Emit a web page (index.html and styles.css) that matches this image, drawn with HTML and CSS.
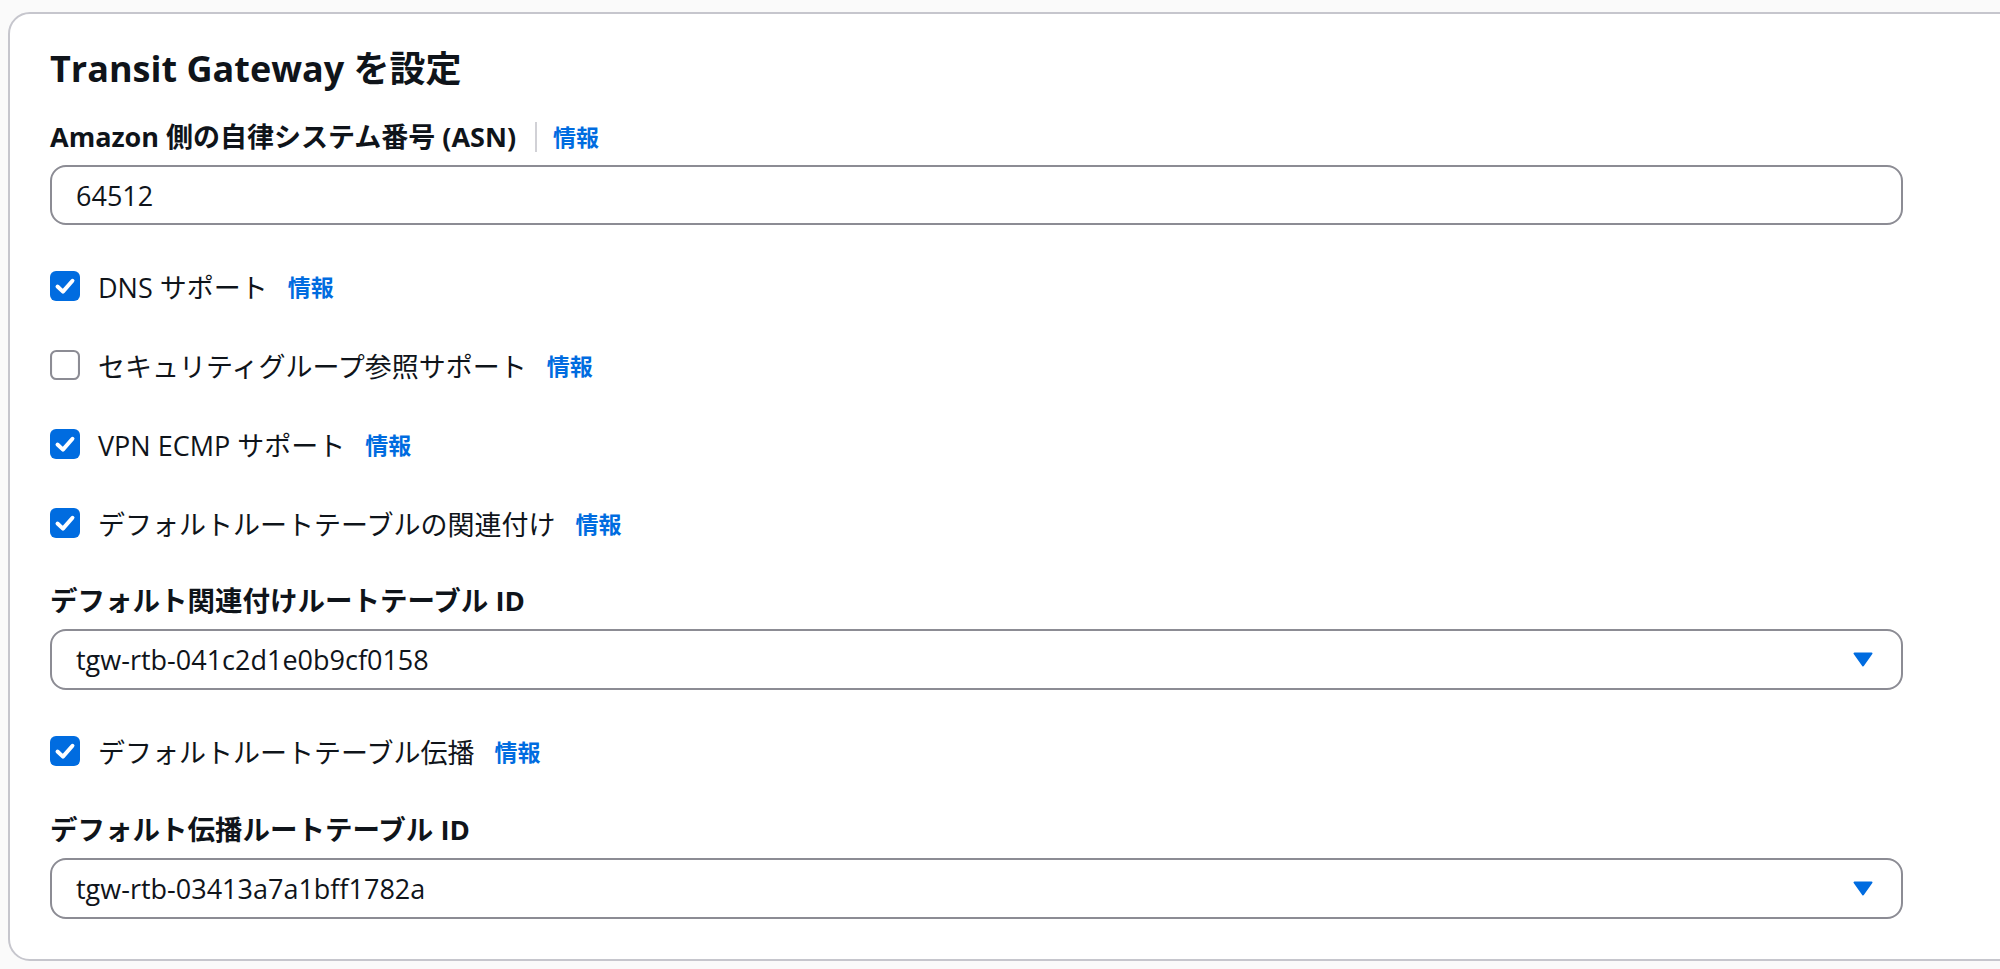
FILE: index.html
```html
<!DOCTYPE html>
<html lang="ja">
<head>
    <meta charset="UTF-8">
    <meta name="viewport" content="width=device-width, initial-scale=1.0">
    <title>Transit Gateway を設定</title>
    <link rel="stylesheet" href="styles.css">
</head>
<body>
    <div class="panel">
        <h2 class="panel-title">Transit Gateway を設定</h2>

        <!-- ASN -->
        <div class="field">
            <div class="field-label">
                <span class="asn-label">Amazon 側の自律システム番号 (ASN)</span>
                <span class="divider"></span>
                <a class="info" href="#">情報</a>
            </div>
            <div class="input">64512</div>
        </div>

        <div class="check-row">
            <svg class="box" viewBox="0 0 16 16"><rect class="on" x="0" y="0" width="16" height="16" rx="3.2"/><polyline class="tick" points="4,8.3 6.9,11 12,5.2"/></svg>
            <span class="check-text">DNS サポート</span>
            <a class="info" href="#">情報</a>
        </div>

        <div class="check-row">
            <svg class="box" viewBox="0 0 16 16"><rect class="off" x="0.55" y="0.55" width="14.9" height="14.9" rx="2.8"/></svg>
            <span class="check-text">セキュリティグループ参照サポート</span>
            <a class="info" href="#">情報</a>
        </div>

        <div class="check-row">
            <svg class="box" viewBox="0 0 16 16"><rect class="on" x="0" y="0" width="16" height="16" rx="3.2"/><polyline class="tick" points="4,8.3 6.9,11 12,5.2"/></svg>
            <span class="check-text">VPN ECMP サポート</span>
            <a class="info" href="#">情報</a>
        </div>

        <div class="check-row">
            <svg class="box" viewBox="0 0 16 16"><rect class="on" x="0" y="0" width="16" height="16" rx="3.2"/><polyline class="tick" points="4,8.3 6.9,11 12,5.2"/></svg>
            <span class="check-text">デフォルトルートテーブルの関連付け</span>
            <a class="info" href="#">情報</a>
        </div>

        <div class="field field-select">
            <div class="field-label"><span>デフォルト関連付けルートテーブル ID</span></div>
            <div class="input select">
                <span>tgw-rtb-041c2d1e0b9cf0158</span>
                <svg class="caret" viewBox="0 0 20 15"><path d="M1.5 1.5 H18.5 L10 13.5 Z"/></svg>
            </div>
        </div>

        <div class="check-row check-after">
            <svg class="box" viewBox="0 0 16 16"><rect class="on" x="0" y="0" width="16" height="16" rx="3.2"/><polyline class="tick" points="4,8.3 6.9,11 12,5.2"/></svg>
            <span class="check-text">デフォルトルートテーブル伝播</span>
            <a class="info" href="#">情報</a>
        </div>

        <div class="field field-select">
            <div class="field-label"><span>デフォルト伝播ルートテーブル ID</span></div>
            <div class="input select">
                <span>tgw-rtb-03413a7a1bff1782a</span>
                <svg class="caret" viewBox="0 0 20 15"><path d="M1.5 1.5 H18.5 L10 13.5 Z"/></svg>
            </div>
        </div>
    </div>
</body>
</html>
```

FILE: styles.css
```css
body {
    margin: 0;
    background-color: #fafafa;
    color: #0f141a;
    font-family: "Open Sans", "Noto Sans CJK JP", sans-serif;
    overflow: hidden;
}
.panel {
    margin: 12px -60px 0 8px;
    padding: 31px 40px 40px 40px;
    background-color: #ffffff;
    border: 2px solid #c6c6cd;
    border-radius: 22px;
}
.panel-title {
    margin: 0;
    font-size: 36px;
    line-height: 48px;
    font-weight: 700;
}
.field {
    margin-top: 26px;
}
.field-label {
    display: flex;
    align-items: center;
    font-size: 27.5px;
    line-height: 36px;
    font-weight: 700;
}
.asn-label {
    font-size: 27px;
}
.divider {
    width: 2px;
    height: 30px;
    margin: 0 16px 0 19px;
    background-color: #d1d1d6;
}
.info {
    color: #006ce0;
    font-size: 23px;
    font-weight: 700;
    text-decoration: none;
}
.input {
    box-sizing: border-box;
    width: 1853px;
    height: 60px;
    margin-top: 10px;
    padding: 0 24px;
    display: flex;
    align-items: center;
    border: 2px solid #8c8c94;
    border-radius: 16px;
    font-size: 27px;
}
.select {
    justify-content: space-between;
    height: 61px;
    padding-right: 28px;
}
.caret {
    width: 20px;
    height: 15px;
}
.caret path {
    fill: #006ce0;
    stroke: #006ce0;
    stroke-width: 2;
    stroke-linejoin: round;
}
.check-row {
    display: flex;
    align-items: center;
    height: 36px;
    margin-top: 43px;
    font-size: 27px;
}
.check-after {
    margin-top: 43px;
}
.field-select {
    margin-top: 42px;
}
.check-after + .field-select {
    margin-top: 43px;
}
.box {
    width: 30px;
    height: 30px;
    margin-right: 18px;
}
.box .on {
    fill: #006ce0;
}
.box .off {
    fill: #ffffff;
    stroke: #8c8c94;
    stroke-width: 1.1;
}
.tick {
    fill: none;
    stroke: #ffffff;
    stroke-width: 2.1;
    stroke-linecap: round;
    stroke-linejoin: round;
}
.check-text {
    margin-right: 20px;
}
```
